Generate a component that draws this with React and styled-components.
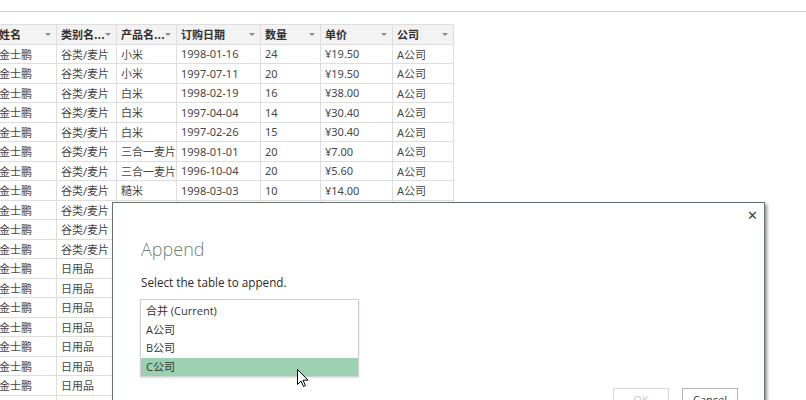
import React from "react";
import styled, { createGlobalStyle } from "styled-components";

const Global = createGlobalStyle`
  html, body { margin: 0; padding: 0; background: #fff; overflow: hidden; }
  body { width: 806px; height: 400px; font-family: "Noto Sans", "Noto Sans CJK SC", sans-serif; }
`;

const Page = styled.div`
  position: relative;
  width: 806px;
  height: 400px;
  overflow: hidden;
`;

const TopBar = styled.div`
  height: 11px;
  border-bottom: 1px solid #cfcfcf;
  margin-bottom: 12px;
`;

const Sheet = styled.table`
  margin-left: -8px;
  width: 461px;
  border-collapse: collapse;
  table-layout: fixed;
  font-size: 11px;
  color: #474747;
  th, td {
    height: 19.5px;
    padding: 0 4px;
    border: 1px solid #dedede;
    white-space: nowrap;
    overflow: hidden;
    text-align: left;
    box-sizing: border-box;
  }
`;

const HeadCell = styled.th`
  background: #f3f3f3;
  font-weight: bold;
  color: #303030;
  font-family: "Noto Sans CJK SC", sans-serif;
  span { display: flex; justify-content: space-between; align-items: center; }
`;

const Arrow = styled.i`
  flex: none;
  width: 0;
  height: 0;
  border-left: 3px solid transparent;
  border-right: 3px solid transparent;
  border-top: 3px solid #8a8a8a;
  margin-right: 1px;
`;

const Dialog = styled.div`
  position: absolute;
  left: 112px;
  top: 202px;
  width: 653px;
  height: 230px;
  background: #fff;
  border: 1px solid #66726c;
  box-shadow: 2px 2px 3px rgba(40, 60, 50, 0.55);
  box-sizing: border-box;
  padding: 34px 28px 0;
  font-family: "Open Sans", "Noto Sans CJK SC", sans-serif;
`;

const Close = styled.div`
  position: absolute;
  right: 6px;
  top: 5px;
  font-size: 13px;
  color: #444;
  font-family: "DejaVu Sans", sans-serif;
`;

const Title = styled.div`
  font-size: 18px;
  color: #6f7f76;
  font-weight: 300;
`;

const Prompt = styled.div`
  margin-top: 13px;
  font-size: 11.7px;
  color: #2c2c2c;
`;

const ListBox = styled.div`
  margin-top: 9px;
  margin-left: -1px;
  width: 217px;
  border: 1px solid #d0d0d0;
  box-shadow: 0 1px 2px rgba(0, 0, 0, 0.12);
  padding-top: 2px;
`;

const Item = styled.div`
  height: 18.6px;
  line-height: 18.6px;
  padding-left: 5px;
  font-size: 11px;
  color: #333;
  background: ${(p) => (p.$selected ? "#9cd2b1" : "transparent")};
`;

const Buttons = styled.div`
  position: absolute;
  left: 500px;
  top: 185px;
  display: flex;
  gap: 13px;
`;

const Button = styled.button`
  width: 56px;
  height: 22px;
  background: #fff;
  border: 1px solid ${(p) => (p.disabled ? "#dadada" : "#b3b3b3")};
  color: ${(p) => (p.disabled ? "#c8c8c8" : "#333")};
  font-family: "Open Sans", sans-serif;
  font-size: 11px;
  padding: 0;
`;

const Cursor = styled.svg`
  position: absolute;
  left: 297px;
  top: 369px;
`;

const cols = [64, 60, 60, 84, 60, 72, 61];
const heads = ["姓名", "类别名...", "产品名...", "订购日期", "数量", "单价", "公司"];

const rows = [
  ["谷类/麦片", "小米", "1998-01-16", "24", "¥19.50", "A公司"],
  ["谷类/麦片", "小米", "1997-07-11", "20", "¥19.50", "A公司"],
  ["谷类/麦片", "白米", "1998-02-19", "16", "¥38.00", "A公司"],
  ["谷类/麦片", "白米", "1997-04-04", "14", "¥30.40", "A公司"],
  ["谷类/麦片", "白米", "1997-02-26", "15", "¥30.40", "A公司"],
  ["谷类/麦片", "三合一麦片", "1998-01-01", "20", "¥7.00", "A公司"],
  ["谷类/麦片", "三合一麦片", "1996-10-04", "20", "¥5.60", "A公司"],
  ["谷类/麦片", "糙米", "1998-03-03", "10", "¥14.00", "A公司"],
  ["谷类/麦片", "", "", "", "", ""],
  ["谷类/麦片", "", "", "", "", ""],
  ["谷类/麦片", "", "", "", "", ""],
  ...Array(8).fill(["日用品", "", "", "", "", ""]),
];

const items = ["合并 (Current)", "A公司", "B公司", "C公司"];

export default function App() {
  return (
    <Page>
      <Global />
      <TopBar />
      <Sheet>
        <colgroup>
          {cols.map((w, i) => (
            <col key={i} style={{ width: w }} />
          ))}
        </colgroup>
        <thead>
          <tr>
            {heads.map((h, i) => (
              <HeadCell key={i} style={i === 0 ? { paddingLeft: 6 } : undefined}>
                <span>
                  {h}
                  <Arrow />
                </span>
              </HeadCell>
            ))}
          </tr>
        </thead>
        <tbody>
          {rows.map((r, i) => (
            <tr key={i}>
              <td style={{ paddingLeft: 6 }}>金士鹏</td>
              {r.map((c, j) => (
                <td key={j}>{c}</td>
              ))}
            </tr>
          ))}
        </tbody>
      </Sheet>

      <Dialog>
        <Close>✕</Close>
        <Title>Append</Title>
        <Prompt>Select the table to append.</Prompt>
        <ListBox>
          {items.map((t, i) => (
            <Item key={t} $selected={i === 3}>
              {t}
            </Item>
          ))}
        </ListBox>
        <Buttons>
          <Button disabled>OK</Button>
          <Button>Cancel</Button>
        </Buttons>
      </Dialog>

      <Cursor width="12" height="19" viewBox="0 0 12 19">
        <path
          d="M0.5 0.5 L0.5 15.5 L4 12 L6.5 17.5 L8.5 16.6 L6 11.2 L11 11.2 Z"
          fill="#fff"
          stroke="#000"
          strokeWidth="1"
          strokeLinejoin="round"
        />
      </Cursor>
    </Page>
  );
}
